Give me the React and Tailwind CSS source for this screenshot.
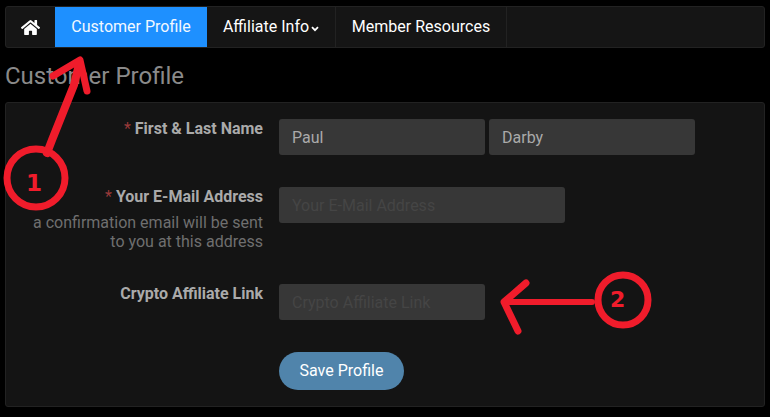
import { FaHome } from 'react-icons/fa'

const font = "font-['Roboto',sans-serif]"

const Field = ({ label, required, hint, children, className }) => (
  <div className={`flex ${className}`}>
    <div className="w-[257px] text-right">
      <div className="text-[16px] leading-[20px] font-bold text-[#aaaaaa]">
        {required && <span className="text-[#9b3a3a] font-normal mr-1">*</span>}
        {label}
      </div>
      {hint && <div className="text-[16px] leading-[19px] mt-[6px] text-[#6f6f6f]">{hint}</div>}
    </div>
    <div className="ml-4 flex gap-1">{children}</div>
  </div>
)

const Input = ({ value, placeholder, className }) => (
  <input
    readOnly
    value={value}
    placeholder={placeholder}
    className={`h-9 rounded-[3px] bg-[#373737] pl-[13px] pr-3 text-[16px] text-[#aaaaaa] placeholder:text-[#454545] outline-none ${className}`}
  />
)

const Annotations = () => (
  <div className="absolute inset-0 pointer-events-none">
    <svg width="770" height="417" className="absolute inset-0" fill="none" stroke="#f01c2b" strokeLinecap="round" strokeLinejoin="round">
      <path d="M47 153 L52 140 L74 85 L79 64" strokeWidth="8" />
      <path d="M53 76 L80 60 L87 91" strokeWidth="7" />
      <circle cx="36" cy="178" r="29" strokeWidth="7" />
      <path d="M592 302 L506 302" strokeWidth="6" />
      <path d="M526 283 L504 302 L518 331" strokeWidth="7" />
      <circle cx="623" cy="300" r="25" strokeWidth="7" />
    </svg>
    <span className="absolute left-[26px] top-[169px] text-[23px] leading-[28px] font-bold text-[#f01c2b] font-['DejaVu_Sans',sans-serif]">1</span>
    <span className="absolute left-[610px] top-[287px] text-[22px] leading-[26px] font-bold text-[#f01c2b] font-['DejaVu_Sans',sans-serif]">2</span>
  </div>
)

export default function App() {
  return (
    <div className={`relative w-[770px] h-[417px] overflow-hidden bg-black px-[5px] pt-[6px] ${font}`}>
      <nav className="flex h-[42px] rounded-[3px] border border-[#222222] bg-[#151515] text-white text-[16px]">
        <a className="flex w-[49px] items-center justify-center">
          <FaHome className="text-[19px]" />
        </a>
        <a className="flex w-[152px] items-center justify-center bg-[#1e90ff] text-[#f2f8ff]">Customer Profile</a>
        <a className="flex w-[129px] items-center justify-center border-r border-[#222222]">
          Affiliate Info
          <svg width="8" height="6" viewBox="0 0 8 6" className="ml-[2px] mt-[3px]" fill="none" stroke="white" strokeWidth="1.8">
            <path d="M1 1.2 L4 4.2 L7 1.2" />
          </svg>
        </a>
        <a className="flex w-[171px] items-center justify-center border-r border-[#222222]">Member Resources</a>
      </nav>

      <h1 className="mt-[13px] text-[24px] leading-[30px] text-[#8a8a8a]">Customer Profile</h1>

      <form className="mt-[11px] h-[305px] rounded-[3px] border border-[#222222] bg-[#141414] pt-4">
        <Field label="First & Last Name" required>
          <Input value="Paul" className="w-[206px]" />
          <Input value="Darby" className="w-[206px]" />
        </Field>
        <Field label="Your E-Mail Address" required hint={<>a confirmation email will be sent<br />to you at this address</>} className="mt-8">
          <Input placeholder="Your E-Mail Address" className="w-[286px] self-start" />
        </Field>
        <Field label="Crypto Affiliate Link" className="mt-[33px]">
          <Input placeholder="Crypto Affiliate Link" className="w-[206px]" />
        </Field>
        <div className="mt-[32px] ml-[273px]">
          <button type="button" className="h-[38px] w-[125px] rounded-full bg-[#5084ab] text-[16px] font-normal text-white">
            Save Profile
          </button>
        </div>
      </form>

      <Annotations />
    </div>
  )
}
